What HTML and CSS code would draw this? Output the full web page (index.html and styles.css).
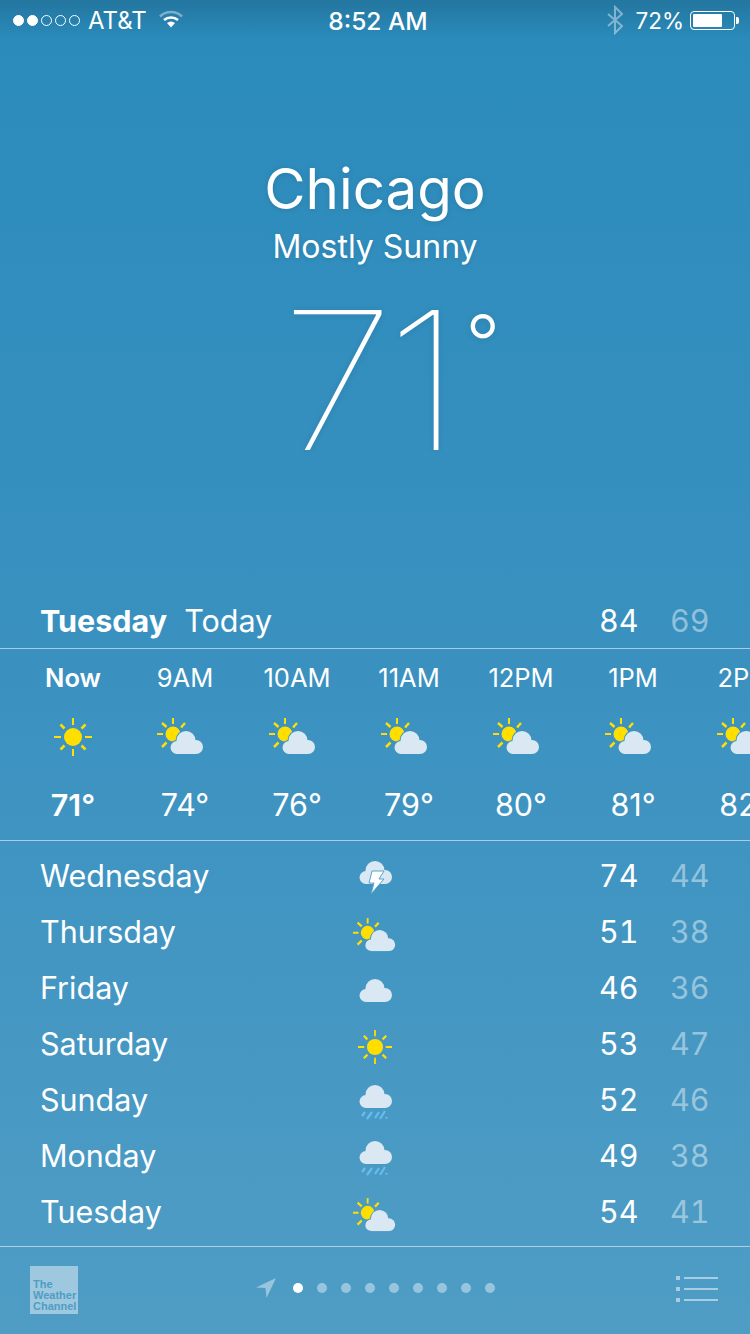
FILE: index.html
```html
<!DOCTYPE html>
<html lang="en">
<head>
    <meta charset="UTF-8">
    <meta name="viewport" content="width=device-width, initial-scale=1.0">
    <title>Weather</title>
    <link rel="stylesheet" href="styles.css">
</head>
<body>
    <svg class="defs" width="0" height="0">
        <defs>
            <g id="cloud-shape">
                <circle cx="7" cy="16.5" r="6.5"/>
                <circle cx="16" cy="9.5" r="9.5"/>
                <circle cx="26" cy="16" r="7"/>
                <rect x="7" y="12" width="19" height="11"/>
            </g>
            <mask id="cloud-cut" maskUnits="userSpaceOnUse" x="0" y="0" width="48" height="38">
                <rect width="48" height="38" fill="white"/>
                <use href="#cloud-shape" x="13" y="13" fill="black" stroke="black" stroke-width="2"/>
            </mask>
            <symbol id="i-sun" viewBox="0 0 38 38">
                <circle cx="19" cy="19" r="9" fill="#ffde00"/>
                <path d="M19 0v7M19 31v7M0 19h7M31 19h7" stroke="#ffde00" stroke-width="2" fill="none"/>
                <path d="M6.500 6.500l4 4M27.500 27.500l4 4M31.500 6.500l-4 4M10.500 27.500l-4 4" stroke="#ffde00" stroke-width="2.500" fill="none"/>
            </symbol>
            <symbol id="i-partly" viewBox="0 0 48 38">
                <g mask="url(#cloud-cut)">
                    <circle cx="16" cy="16" r="7.500" fill="#ffde00"/>
                    <path d="M16 0v6M0 16h6" stroke="#ffde00" stroke-width="2" fill="none"/>
                    <path d="M5 5l4.500 4M28 5l-4 4.500M9.500 24.500L5 29" stroke="#ffde00" stroke-width="2.500" fill="none"/>
                </g>
                <use href="#cloud-shape" x="13" y="13" fill="#d9e8f2"/>
            </symbol>
            <symbol id="i-cloud" viewBox="0 0 33 24">
                <use href="#cloud-shape" fill="#d9e8f2"/>
            </symbol>
            <symbol id="i-storm" viewBox="0 0 33 36">
                <use href="#cloud-shape" fill="#d9e8f2"/>
                <path d="M13 10h12l-5 8h5L12 33l3-11h-5z" fill="#fff" stroke="#5aa3cd" stroke-width="1"/>
            </symbol>
            <symbol id="i-rain" viewBox="0 0 33 36">
                <use href="#cloud-shape" fill="#d9e8f2"/>
                <path d="M6 27l-3 4M13 27l-5 7M20 27l-4 6M26 26l-5 8M28 32l-1 1.500" stroke="#66bdf0" stroke-width="2.200" fill="none"/>
            </symbol>
        </defs>
    </svg>

    <div class="status-bar">
        <div class="status-left">
            <span class="signal">
                <i class="on"></i><i class="on"></i><i></i><i></i><i></i>
            </span>
            <span class="carrier">AT&amp;T</span>
            <svg class="wifi" width="24" height="18" viewBox="0 0 24 18">
                <path d="M1 6.500C7 .5 17 .5 23 6.500" stroke="#fff" stroke-opacity=".4" stroke-width="2.500" fill="none"/>
                <path d="M5 10c4-3.500 10-3.500 14 0" stroke="#fff" stroke-width="2.500" fill="none"/>
                <path d="M8 13c2.500-2 5.500-2 8 0l-4 4.500z" fill="#fff"/>
            </svg>
        </div>
        <div class="status-time">8:52 AM</div>
        <div class="status-right">
            <svg class="bluetooth" width="16" height="30" viewBox="0 0 16 30">
                <path d="M1 9l14 12-7 7V2l7 7L1 21" stroke="#fff" stroke-opacity=".42" stroke-width="2" fill="none"/>
            </svg>
            <span class="battery-pct">72%</span>
            <span class="battery"><span class="battery-level" style="width: 74%"></span></span>
        </div>
    </div>

    <header class="current">
        <h1 class="city">Chicago</h1>
        <p class="condition">Mostly Sunny</p>
        <p class="temp-now"><span class="temp-digits">71</span><span class="temp-degree">°</span></p>
    </header>

    <div class="today-row">
        <span class="today-day">Tuesday</span>
        <span class="today-label">Today</span>
        <span class="temps">
            <span class="hi">84</span>
            <span class="lo">69</span>
        </span>
    </div>

    <div class="hours">
        <div class="hour now">
            <span class="hour-name">Now</span>
            <svg class="hour-icon" width="38" height="38"><use href="#i-sun" width="38" height="38"/></svg>
            <span class="hour-temp">71°</span>
        </div>
        <div class="hour">
            <span class="hour-name">9AM</span>
            <svg class="hour-icon partly" width="48" height="38"><use href="#i-partly" width="48" height="38"/></svg>
            <span class="hour-temp">74°</span>
        </div>
        <div class="hour">
            <span class="hour-name">10AM</span>
            <svg class="hour-icon partly" width="48" height="38"><use href="#i-partly" width="48" height="38"/></svg>
            <span class="hour-temp">76°</span>
        </div>
        <div class="hour">
            <span class="hour-name">11AM</span>
            <svg class="hour-icon partly" width="48" height="38"><use href="#i-partly" width="48" height="38"/></svg>
            <span class="hour-temp">79°</span>
        </div>
        <div class="hour">
            <span class="hour-name">12PM</span>
            <svg class="hour-icon partly" width="48" height="38"><use href="#i-partly" width="48" height="38"/></svg>
            <span class="hour-temp">80°</span>
        </div>
        <div class="hour">
            <span class="hour-name">1PM</span>
            <svg class="hour-icon partly" width="48" height="38"><use href="#i-partly" width="48" height="38"/></svg>
            <span class="hour-temp">81°</span>
        </div>
        <div class="hour">
            <span class="hour-name">2PM</span>
            <svg class="hour-icon partly" width="48" height="38"><use href="#i-partly" width="48" height="38"/></svg>
            <span class="hour-temp">82°</span>
        </div>
    </div>

    <div class="days">
        <div class="day">
            <span class="day-name">Wednesday</span>
            <svg class="day-icon" width="33" height="36"><use href="#i-storm" width="33" height="36"/></svg>
            <span class="temps"><span class="hi">74</span><span class="lo">44</span></span>
        </div>
        <div class="day">
            <span class="day-name">Thursday</span>
            <svg class="day-icon" width="44" height="35"><use href="#i-partly" width="44" height="35"/></svg>
            <span class="temps"><span class="hi">51</span><span class="lo">38</span></span>
        </div>
        <div class="day">
            <span class="day-name">Friday</span>
            <svg class="day-icon" width="33" height="24"><use href="#i-cloud" width="33" height="24"/></svg>
            <span class="temps"><span class="hi">46</span><span class="lo">36</span></span>
        </div>
        <div class="day">
            <span class="day-name">Saturday</span>
            <svg class="day-icon" width="34" height="34"><use href="#i-sun" width="34" height="34"/></svg>
            <span class="temps"><span class="hi">53</span><span class="lo">47</span></span>
        </div>
        <div class="day">
            <span class="day-name">Sunday</span>
            <svg class="day-icon" width="33" height="36"><use href="#i-rain" width="33" height="36"/></svg>
            <span class="temps"><span class="hi">52</span><span class="lo">46</span></span>
        </div>
        <div class="day">
            <span class="day-name">Monday</span>
            <svg class="day-icon" width="33" height="36"><use href="#i-rain" width="33" height="36"/></svg>
            <span class="temps"><span class="hi">49</span><span class="lo">38</span></span>
        </div>
        <div class="day">
            <span class="day-name">Tuesday</span>
            <svg class="day-icon" width="44" height="35"><use href="#i-partly" width="44" height="35"/></svg>
            <span class="temps"><span class="hi">54</span><span class="lo">41</span></span>
        </div>
    </div>

    <footer class="toolbar">
        <div class="twc-logo">The<br>Weather<br>Channel</div>
        <div class="pager">
            <svg class="locator" width="22" height="22" viewBox="0 0 22 22">
                <path d="M1 10.500L21 1l-9.500 20-1-10z" fill="#fff" fill-opacity=".42"/>
            </svg>
            <i class="dot active"></i><i class="dot"></i><i class="dot"></i><i class="dot"></i><i class="dot"></i><i class="dot"></i><i class="dot"></i><i class="dot"></i><i class="dot"></i>
        </div>
        <div class="list-btn">
            <div class="list-line"><i></i><b></b></div>
            <div class="list-line"><i></i><b></b></div>
            <div class="list-line"><i></i><b></b></div>
        </div>
    </footer>
</body>
</html>
```

FILE: styles.css
```css
html { height: 100%; background: #3d93c1; }
body { font-family: 'Inter', 'Roboto', sans-serif; width: 750px; height: 1334px; margin: 0; overflow: hidden; color: #fff; background: linear-gradient(to bottom, #2a8bbb 0%, #3a91c0 50%, #4f9dc5 100%); }
.defs { position: absolute; }

/* Status bar */
.status-bar { height: 40px; display: grid; grid-template-columns: 1fr auto 1fr; align-items: center; padding: 0 12px 0 13px; background: linear-gradient(to bottom, #23769f, rgba(35,118,159,0)); font-size: 24px; }
.status-left { display: flex; align-items: center; }
.signal { display: flex; gap: 3px; margin-right: 8px; }
.signal i { width: 11px; height: 11px; box-sizing: border-box; border: 1px solid #fff; border-radius: 50%; }
.signal i.on { background: #fff; }
.carrier { margin-right: 12px; font-weight: 400; }
.wifi { margin-top: -2px; }
.status-time { font-weight: 500; margin-left: 5px; padding-top: 1px; font-size: 24.5px; }
.status-right { display: flex; align-items: center; justify-content: flex-end; }
.bluetooth { margin-right: 12px; }
.battery-pct { margin-right: 6px; font-size: 22.5px; }
.battery { position: relative; width: 45px; height: 19px; box-sizing: border-box; border: 1px solid #fff; border-radius: 4px; padding: 2px; margin-right: 3px; }
.battery::after { content: ''; position: absolute; right: -5px; top: 5px; width: 3px; height: 7px; background: #fff; border-radius: 0 2px 2px 0; }
.battery-level { display: block; height: 100%; background: #fff; border-radius: 1px; }

/* Current conditions */
.current { height: 552px; text-align: center; box-sizing: border-box; padding-top: 115px; }
.city { margin: 0; font-size: 56.5px; font-weight: 400; line-height: 68px; text-shadow: 0 1px 6px rgba(0,0,0,0.12); }
.condition { margin: 2px 0 0; font-size: 32px; line-height: 44px; text-shadow: 0 1px 4px rgba(0,0,0,0.1); }
.temp-now { margin: 16px 0 0 0; height: 190px; padding-left: 281px; text-align: left; font-size: 192px; font-weight: 130; line-height: 190px; text-shadow: 0 1px 6px rgba(0,0,0,0.1); }
.temp-digits { display: inline-block; letter-spacing: -8px; transform: scaleX(1.08); transform-origin: left; }
.temp-degree { margin-left: 25px; font-size: 76px; font-weight: 300; line-height: 0; vertical-align: 80px; }

/* Today */
.today-row { height: 56px; display: flex; align-items: center; padding: 0 43px 0 40px; border-bottom: 1px solid rgba(255,255,255,0.55); font-size: 30.5px; }
.today-day { font-weight: 700; margin-right: 17px; }
.temps { display: flex; justify-content: flex-end; gap: 34px; margin-left: auto; font-variant-numeric: tabular-nums; }
.hi, .lo { width: 37px; text-align: right; }
.lo { color: rgba(255,255,255,0.45); }

/* Hourly strip */
.hours { height: 191px; display: flex; padding-left: 17px; overflow: hidden; border-bottom: 1px solid rgba(255,255,255,0.55); }
.hour { flex: 0 0 112px; display: flex; flex-direction: column; align-items: center; }
.hour-name { margin-top: 13px; font-size: 25.5px; line-height: 32px; }
.hour-icon { margin-top: 24px; }
.hour-icon.partly { margin-right: 8px; }
.hour-temp { margin-top: 30px; font-size: 30.5px; line-height: 38px; }
.now .hour-name, .now .hour-temp { font-weight: 600; }

/* Daily list */
.days { height: 406px; box-sizing: border-box; padding-top: 7px; border-bottom: 1px solid rgba(255,255,255,0.55); }
.day { height: 56px; display: grid; grid-template-columns: 1fr 70px 1fr; align-items: center; justify-items: center; padding: 0 43px 0 40px; font-size: 30.5px; }
.day-name { justify-self: start; margin-bottom: 2px; }
.day-icon { margin: 6px 0 0 3px; }
.day .temps { justify-self: end; margin-bottom: 2px; }

/* Bottom bar */
.toolbar { height: 86px; display: grid; grid-template-columns: 1fr auto 1fr; align-items: center; padding: 0 32px 0 30px; }
.twc-logo { width: 48px; height: 48px; box-sizing: border-box; padding: 13px 0 0 3px; background: rgba(255,255,255,0.45); color: #4f9dc5; font-family: 'Liberation Sans', sans-serif; font-size: 11px; font-weight: 700; line-height: 11px; }
.pager { display: flex; align-items: center; gap: 14px; margin: -4px 0 0 2px; }
.locator { margin-right: 2px; }
.dot { width: 10px; height: 10px; border-radius: 50%; background: rgba(255,255,255,0.42); }
.dot.active { background: #fff; }
.list-btn { justify-self: end; display: flex; flex-direction: column; gap: 7px; margin-top: -2px; }
.list-line { display: flex; align-items: center; gap: 4px; }
.list-line i { width: 4px; height: 4px; background: rgba(255,255,255,0.5); }
.list-line b { width: 34px; height: 2px; background: rgba(255,255,255,0.5); }
```
